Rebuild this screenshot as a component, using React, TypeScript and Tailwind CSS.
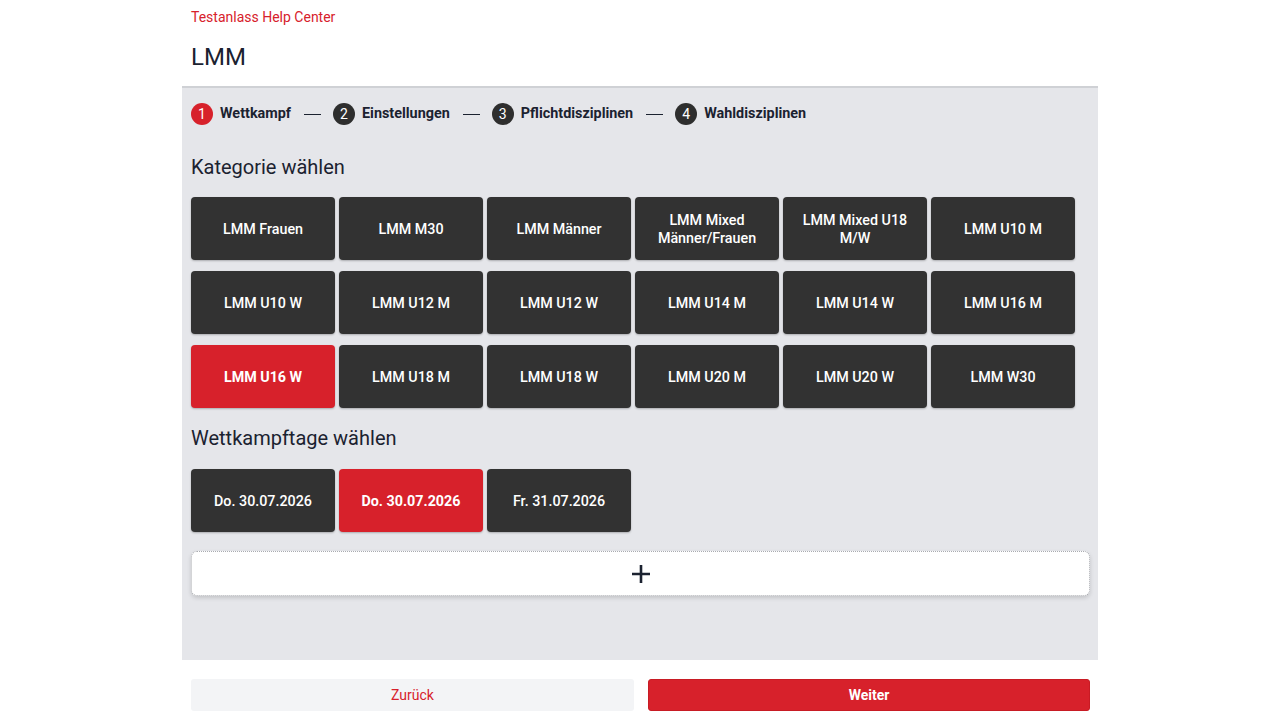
import { useState } from "react";

const categories = [
  "LMM Frauen",
  "LMM M30",
  "LMM Männer",
  "LMM Mixed Männer/Frauen",
  "LMM Mixed U18 M/W",
  "LMM U10 M",
  "LMM U10 W",
  "LMM U12 M",
  "LMM U12 W",
  "LMM U14 M",
  "LMM U14 W",
  "LMM U16 M",
  "LMM U16 W",
  "LMM U18 M",
  "LMM U18 W",
  "LMM U20 M",
  "LMM U20 W",
  "LMM W30",
];

const days = ["Do. 30.07.2026", "Do. 30.07.2026", "Fr. 31.07.2026"];

const steps = ["Wettkampf", "Einstellungen", "Pflichtdisziplinen", "Wahldisziplinen"];

function Tile({ label, active, onClick }: { label: string; active: boolean; onClick: () => void }) {
  return (
    <button
      onClick={onClick}
      className={
        "h-[63px] w-[144px] rounded-[4px] px-3 text-[14.3px] leading-[18px] text-white shadow-[0_1px_2px_rgba(0,0,0,0.25)] " +
        (active ? "bg-[#d7212b] font-bold" : "bg-[#323232] font-medium")
      }
    >
      {label}
    </button>
  );
}

export default function App() {
  const [cat, setCat] = useState(12);
  const [day, setDay] = useState(1);

  return (
    <div className="min-h-screen bg-white font-['Roboto',sans-serif] text-[#1b2230]">
      <div className="mx-auto w-[916px]">
        <header className="px-[9px] pt-[9px]">
          <div className="text-[14px] leading-[16px] text-[#d7212b]">Testanlass Help Center</div>
          <h1 className="mt-[18px] text-[24px] leading-[28px] text-[#1b2230]">LMM</h1>
        </header>

        <main className="mt-[15px] h-[574px] border-t-2 border-[#cfd1d5] bg-[#e5e6ea] px-[9px] pr-[8px] pt-[15px]">
          <div className="flex h-[22px] items-center text-[14.4px] font-bold">
            {steps.map((s, i) => (
              <div key={s} className="flex items-center">
                {i > 0 && <div className="ml-[13px] mr-[12px] h-[1px] w-[17px] bg-[#1b2230]" />}
                <span
                  className={
                    "flex h-[22px] w-[22px] items-center justify-center rounded-full text-[14px] font-normal text-white " +
                    (i === 0 ? "bg-[#d7212b]" : "bg-[#2e2e2e]")
                  }
                >
                  {i + 1}
                </span>
                <span className="ml-[7px]">{s}</span>
              </div>
            ))}
          </div>

          <h2 className="mt-[28px] text-[20px] leading-[28px]">Kategorie wählen</h2>
          <div className="mt-[16px] grid w-[884px] grid-cols-6 gap-x-[4px] gap-y-[11px]">
            {categories.map((c, i) => (
              <Tile key={c} label={c} active={cat === i} onClick={() => setCat(i)} />
            ))}
          </div>

          <h2 className="mt-[16px] text-[20px] leading-[28px]">Wettkampftage wählen</h2>
          <div className="mt-[17px] flex gap-[4px]">
            {days.map((d, i) => (
              <Tile key={i} label={d} active={day === i} onClick={() => setDay(i)} />
            ))}
          </div>

          <button className="mt-[19px] flex h-[45px] w-[899px] items-center justify-center rounded-[6px] border border-dotted border-[#a9abb0] bg-white shadow-[0_2px_4px_rgba(0,0,0,0.15)]">
            <svg width="20" height="20" viewBox="0 0 20 20" stroke="#1b2230" strokeWidth="2.6" strokeLinecap="butt">
              <path d="M10 1v18M1 10h18" />
            </svg>
          </button>
        </main>

        <footer className="flex gap-[14px] px-[9px] pr-[8px] pt-[19px]">
          <button className="h-[32px] w-[443px] rounded-[3px] bg-[#f3f4f6] text-[14px] text-[#d7212b]">Zurück</button>
          <button className="h-[32px] w-[442px] rounded-[3px] border border-[#c81b24] bg-[#d7212b] text-[14px] font-bold text-white">
            Weiter
          </button>
        </footer>
      </div>
    </div>
  );
}
